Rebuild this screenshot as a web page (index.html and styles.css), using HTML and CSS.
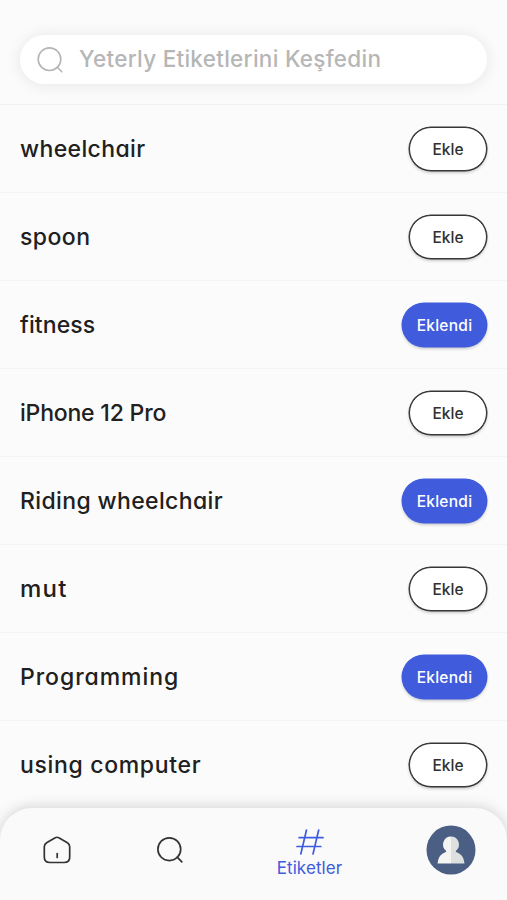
FILE: index.html
```html
<!DOCTYPE html>
<html lang="tr">
<head>
<meta charset="utf-8">
<title>Etiketler</title>
<link rel="stylesheet" href="styles.css">
</head>
<body>
<div class="app">
  <header class="header">
    <div class="search">
      <svg class="search-icon" viewBox="0 0 26 26"><circle cx="12.5" cy="12.2" r="11.3"/><path d="M20.3 20.3l4.5 4.5"/></svg>
      <span class="placeholder">Yeterly Etiketlerini Keşfedin</span>
    </div>
  </header>
  <main class="list">
    <div class="row"><span class="tag wheelchair">wheelchair</span><button class="btn">Ekle</button></div>
    <div class="row"><span class="tag spoon">spoon</span><button class="btn">Ekle</button></div>
    <div class="row"><span class="tag fitness">fitness</span><button class="btn added">Eklendi</button></div>
    <div class="row"><span class="tag iphone">iPhone 12 Pro</span><button class="btn">Ekle</button></div>
    <div class="row"><span class="tag riding">Riding wheelchair</span><button class="btn added">Eklendi</button></div>
    <div class="row"><span class="tag mut">mut</span><button class="btn">Ekle</button></div>
    <div class="row"><span class="tag programming">Programming</span><button class="btn added">Eklendi</button></div>
    <div class="row"><span class="tag computer">using computer</span><button class="btn">Ekle</button></div>
  </main>
  <nav class="nav">
    <a class="item"><svg class="icon" viewBox="0 0 28 28"><path d="M12.2 1.8Q14 .7 15.8 1.8L24.4 6.7Q26.7 8.1 26.7 10.8V21Q26.7 26.5 21.2 26.5H6.8Q1.3 26.5 1.3 21V10.8Q1.3 8.1 3.6 6.7Z"/><path d="M14.2 17.500v4"/></svg></a>
    <a class="item"><svg class="icon" viewBox="0 0 28 28"><circle cx="13.3" cy="13.2" r="11.4"/><path d="M21.2 21.2l4.6 4.7"/></svg></a>
    <a class="item active"><svg class="icon hash" viewBox="0 0 28 26"><path d="M10.500 1L4.800 25M22.700 1L17 25M3.200 8.700H27M1 17.500H24.800"/></svg><span class="label">Etiketler</span></a>
    <a class="item"><svg class="avatar" viewBox="0 0 50 50"><circle cx="25" cy="25" r="24.5" fill="#4b5e84"/><path fill="#f4f4f3" d="M25 11.500a8 8 0 0 0-5 14.200q.7.8-.2 1.300Q12 29.500 11.500 38.500H25Z"/><path fill="#dedfdf" d="M25 11.500a8 8 0 0 1 5 14.200q-.7.8.2 1.300Q38 29.500 38.500 38.500H25Z"/></svg></a>
  </nav>
</div>
</body>
</html>
```
FILE: styles.css
```css
* { box-sizing: border-box; }
body {
  margin: 0;
  background: #fbfbfb;
  color: #202020;
  font-family: Inter, "Noto Sans", sans-serif;
  font-feature-settings: "cv11" 1;
}
.app {
  height: 900px;
  display: flex;
  flex-direction: column;
  overflow: hidden;
}
.header {
  flex: none;
  height: 105px;
  padding: 35px 20px 0;
  border-bottom: 1px solid #f2f2f2;
}
.search {
  display: flex;
  align-items: center;
  gap: 16px;
  height: 49px;
  padding: 0 17px;
  border-radius: 25px;
  background: #fff;
  box-shadow: 0 1px 16px rgba(0, 0, 0, .09);
}
.search-icon {
  width: 26px;
  height: 26px;
  fill: none;
  stroke: #b5b5b5;
  stroke-width: 1.6;
  stroke-linecap: round;
}
.placeholder {
  padding-bottom: 2px;
  color: #b6b6b6;
  font-size: 22.5px;
  font-weight: 500;
  line-height: 30px;
  letter-spacing: .28px;
  white-space: nowrap;
}
.list {
  flex: 1;
  min-height: 0;
}
.row {
  display: flex;
  align-items: center;
  justify-content: space-between;
  height: 88px;
  padding: 0 20px 0 20px;
  border-bottom: 1px solid #f4f4f4;
}
.row:last-child { border-bottom-color: transparent; }
.tag {
  font-size: 23px;
  font-weight: 450;
  line-height: 30px;
  white-space: nowrap;
}
.wheelchair { letter-spacing: .38px; }
.spoon { letter-spacing: .45px; }
.fitness { letter-spacing: .1px; }
.iphone { letter-spacing: -.2px; }
.riding { letter-spacing: .37px; }
.mut { font-size: 24px; letter-spacing: 1.3px; }
.programming { letter-spacing: .95px; }
.computer { letter-spacing: .67px; }
.btn {
  width: 78px;
  height: 44px;
  margin-top: 1px;
  padding: 1px 0 0;
  border: 1px solid #363636;
  border-radius: 22px;
  background: #fff;
  color: #303030;
  font: 500 15.5px Inter, "Noto Sans", sans-serif;
  box-shadow: 0 0 0 .5px #363636, 0 2px 3px rgba(0, 0, 0, .2);
}
.btn.added {
  width: 85px;
  border-color: #405cdd;
  background: #405cdd;
  box-shadow: 0 0 0 .5px #405cdd, 0 2px 3px rgba(0, 0, 0, .2);
  color: #fff;
  letter-spacing: .25px;
}
.nav {
  position: relative;
  flex: none;
  display: grid;
  grid-template-columns: 114px 111px 169px 113px;
  height: 92px;
  padding-bottom: 8px;
  border-radius: 32px 32px 0 0;
  background: #fafafa;
  box-shadow: 0 -1px 14px rgba(0, 0, 0, .17);
}
.item {
  display: flex;
  flex-direction: column;
  align-items: center;
  justify-content: center;
}
.icon {
  width: 28px;
  height: 28px;
  fill: none;
  stroke: #333;
  stroke-width: 1.7;
  stroke-linecap: round;
  stroke-linejoin: round;
}
.active {
  color: #405cdd;
}
.active .hash {
  height: 26px;
  margin-top: 7px;
  stroke: #405cdd;
}
.label {
  margin-top: 2px;
  font-size: 17px;
  line-height: 22px;
  letter-spacing: .1px;
}
.avatar {
  width: 50px;
  height: 50px;
}
```
